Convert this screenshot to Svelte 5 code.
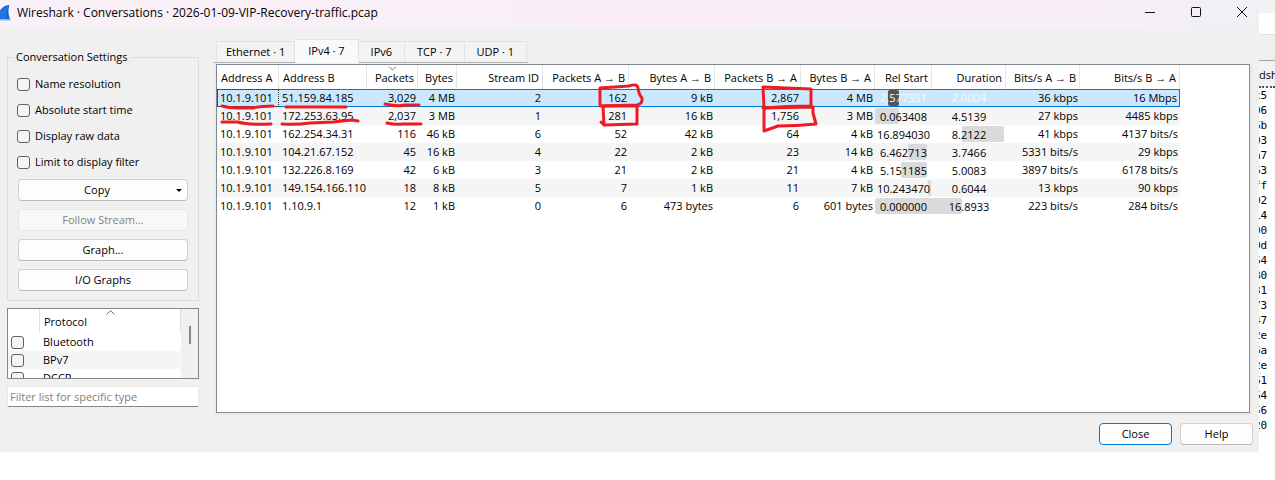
<script lang="ts">
    const options = [
        'Name resolution',
        'Absolute start time',
        'Display raw data',
        'Limit to display filter'
    ];

    const tabs = ['Ethernet · 1', 'IPv4 · 7', 'IPv6', 'TCP · 7', 'UDP · 1'];
    let activeTab = $state(1);

    const protocols = ['Bluetooth', 'BPv7', 'DCCP'];

    const columns = [
        { name: 'Address A', width: 62, left: true },
        { name: 'Address B', width: 88, left: true },
        { name: 'Packets', width: 51, sorted: true },
        { name: 'Bytes', width: 39 },
        { name: 'Stream ID', width: 86 },
        { name: 'Packets A → B', width: 86 },
        { name: 'Bytes A → B', width: 86 },
        { name: 'Packets B → A', width: 86 },
        { name: 'Bytes B → A', width: 74 },
        { name: 'Rel Start', width: 57 },
        { name: 'Duration', width: 74 },
        { name: 'Bits/s A → B', width: 74 },
        { name: 'Bits/s B → A', width: 100 }
    ];

    const rows = [
        ['10.1.9.101', '51.159.84.185', '3,029', '4 MB', '2', '162', '9 kB', '2,867', '4 MB', '2.577351', '2.0004', '36 kbps', '16 Mbps'],
        ['10.1.9.101', '172.253.63.95', '2,037', '3 MB', '1', '281', '16 kB', '1,756', '3 MB', '0.063408', '4.5139', '27 kbps', '4485 kbps'],
        ['10.1.9.101', '162.254.34.31', '116', '46 kB', '6', '52', '42 kB', '64', '4 kB', '16.894030', '8.2122', '41 kbps', '4137 bits/s'],
        ['10.1.9.101', '104.21.67.152', '45', '16 kB', '4', '22', '2 kB', '23', '14 kB', '6.462713', '3.7466', '5331 bits/s', '29 kbps'],
        ['10.1.9.101', '132.226.8.169', '42', '6 kB', '3', '21', '2 kB', '21', '4 kB', '5.151185', '5.0083', '3897 bits/s', '6178 bits/s'],
        ['10.1.9.101', '149.154.166.110', '18', '8 kB', '5', '7', '1 kB', '11', '7 kB', '10.243470', '0.6044', '13 kbps', '90 kbps'],
        ['10.1.9.101', '1.10.9.1', '12', '1 kB', '0', '6', '473 bytes', '6', '601 bytes', '0.000000', '16.8933', '223 bits/s', '284 bits/s']
    ];
    let selected = $state(0);

    const START = 9;
    const DURATION = 10;

    // the time bar runs across the Rel Start and Duration columns
    const span = Math.max(...rows.map(r => Number(r[START]) + Number(r[DURATION])));
    const scale = (columns[START].width + columns[DURATION].width - 2) / span;

    const hexBytes = ['c5', '06', '6b', '03', 'a7', '63', 'ff', '02', '14', '00', '0d', '64', '80', '31', '73', '47', '2e', '6a', '2e', '61', '64', '56', '20'];
</script>

<div class="screen">
    <div class="dialog">
        <header class="titlebar">
            <svg class="fin" width="11" height="18" viewBox="0 0 11 18" aria-hidden="true">
                <path d="M0 7C2 3 5 1.500 9.500 1C8 5 8 10 10 15.500H0Z" fill="#1560c8" />
                <path d="M0 8.500C3 4.500 5 2.500 9 1.500C6.500 6 6 10 7 15H0Z" fill="#1f78e6" />
                <path d="M0 15H10.500V16.500H0Z" fill="#9db0c8" />
            </svg>
            <h1>Wireshark · Conversations · 2026-01-09-VIP-Recovery-traffic.pcap</h1>
            <div class="window-buttons">
                <button aria-label="Minimize">
                    <svg width="12" height="12" viewBox="0 0 12 12"><path d="M1 6.500H11" /></svg>
                </button>
                <button aria-label="Maximize">
                    <svg width="12" height="12" viewBox="0 0 12 12"><rect x="1.500" y="1.500" width="9" height="9" rx="1" /></svg>
                </button>
                <button aria-label="Close window">
                    <svg width="12" height="12" viewBox="0 0 12 12"><path d="M1 1L11 11M11 1L1 11" /></svg>
                </button>
            </div>
        </header>

        <div class="body">
            <aside>
                <fieldset>
                    <legend>Conversation Settings</legend>
                    {#each options as option}
                        <label class="option"><input type="checkbox" />{option}</label>
                    {/each}
                    <div class="actions">
                        <button class="btn copy">Copy<span class="arrow"></span></button>
                        <button class="btn" disabled>Follow Stream...</button>
                        <button class="btn">Graph...</button>
                        <button class="btn">I/O Graphs</button>
                    </div>
                </fieldset>

                <div class="protocols">
                    <div class="protocol-list">
                        <div class="protocol-header">
                            <span class="tick-col"></span>
                            <span class="name-col">
                                Protocol
                                <svg class="sort" width="9" height="5" viewBox="0 0 9 5"><path d="M.5 4.500L4.500 .5L8.500 4.500" /></svg>
                            </span>
                        </div>
                        {#each protocols as protocol}
                            <label class="protocol"><input type="checkbox" />{protocol}</label>
                        {/each}
                    </div>
                    <div class="scrollbar"><div class="thumb"></div></div>
                </div>

                <input class="filter" type="text" placeholder="Filter list for specific type" aria-label="Filter list" />
            </aside>

            <main>
                <div class="tabs" role="tablist">
                    {#each tabs as tab, i}
                        <button
                            role="tab"
                            class="tab"
                            class:active={activeTab === i}
                            aria-selected={activeTab === i}
                            onclick={() => (activeTab = i)}
                        >{tab}</button>
                    {/each}
                </div>
                <div class="pane">
                    <div class="view">
                        <table>
                            <colgroup>
                                {#each columns as col}
                                    <col style="width: {col.width}px" />
                                {/each}
                            </colgroup>
                            <thead>
                                <tr>
                                    {#each columns as col}
                                        <th class:left={col.left}>
                                            {col.name}
                                            {#if col.sorted}
                                                <svg class="sort" width="9" height="5" viewBox="0 0 9 5"><path d="M1 .5L4.500 4L8 .5" /></svg>
                                            {/if}
                                        </th>
                                    {/each}
                                </tr>
                            </thead>
                            <tbody>
                                {#each rows as row, r}
                                    <tr class:selected={selected === r} onclick={() => (selected = r)}>
                                        {#each row as cell, c}
                                            <td class:left={columns[c].left} class:time={c === START || c === DURATION}>
                                                {#if c === START}
                                                    <span
                                                        class="bar"
                                                        style="left: {Number(cell) * scale}px; width: {Number(row[DURATION]) * scale}px"
                                                    ></span>
                                                {/if}
                                                <span class="value">{cell}</span>
                                            </td>
                                        {/each}
                                    </tr>
                                {/each}
                            </tbody>
                        </table>

                        <!-- hand-drawn marks over the busiest conversations -->
                        <svg class="marks" width="620" height="75" viewBox="0 0 620 75" aria-hidden="true">
                            <path d="M5 41Q12 43 20 43L36 43Q44 41 56 41" />
                            <path d="M69 42H129" />
                            <path d="M168 39Q180 42 188 40L202 40" />
                            <path d="M5 57L21 57Q30 60 54 59" />
                            <path d="M65 59Q80 60 93 58L116 57L135 55L141 56" />
                            <path d="M170 58Q178 60 186 59L204 59" />
                            <path d="M383 40V23L412 21Q420 18 421 23Q422 30 425 33Q426 39 420 40L383 41" />
                            <path d="M386 41L420 41L420 59L387 60L386 41M384 57L387 60" />
                            <path d="M546 22L547 43Q570 41 594 41L594 24Q570 23 546 22" />
                            <path d="M546 43L596 42L596 48L599 59Q580 61 561 61L547 66V43" />
                        </svg>
                    </div>
                </div>
            </main>
        </div>

        <footer>
            <button class="btn default">Close</button>
            <button class="btn">Help</button>
        </footer>
    </div>

    <div class="behind">
        <div class="toolbar"></div>
        <div class="field"></div>
        <div class="strip"></div>
        <div class="hex-header">dsh</div>
        <div class="hex">
            {#each hexBytes as byte}
                <div>{byte}</div>
            {/each}
        </div>
    </div>
</div>

<style>
    :global(body) {
        margin: 0;
        background: #fff;
    }

    .screen {
        display: flex;
        align-items: flex-start;
        font-family: 'Open Sans', 'Noto Sans', sans-serif;
        font-size: 11px;
        line-height: 16px;
        color: #000;
    }

    button, input {
        font: inherit;
        color: inherit;
        box-sizing: border-box;
    }

    .dialog {
        flex: 1;
        min-width: 0;
        background: #f0f0f0;
    }

    .titlebar {
        display: flex;
        align-items: center;
        height: 28px;
        background: linear-gradient(90deg, #f9f1f8, #f9eef5 60%, #f8eff6 88%, #f2f0f4 96%);
    }

    .fin {
        margin: 0 6px 3px 0;
    }

    h1 {
        flex: 1;
        margin: 0;
        padding-bottom: 2px;
        font-size: 12px;
        font-weight: 400;
    }

    .window-buttons {
        display: flex;
        padding: 0 11px 4px 0;
        gap: 34px;
    }

    .window-buttons button {
        display: flex;
        width: 12px;
        padding: 0;
        border: 0;
        background: none;
    }

    .window-buttons svg {
        fill: none;
        stroke: #111;
    }

    .body {
        display: grid;
        grid-template-columns: 192px minmax(0, 1fr);
        gap: 15px;
        padding: 11px 7px 0;
    }

    aside {
        display: flex;
        flex-direction: column;
        gap: 7px;
        padding: 10px 0 8px;
    }

    fieldset {
        margin: 0;
        padding: 6px 10px 9px 9px;
        border: 1px solid #dcdcdc;
    }

    legend {
        margin-left: -3px;
        padding: 0 2px;
    }

    .option {
        display: flex;
        align-items: center;
        gap: 5px;
        height: 26px;
    }

    input[type='checkbox'] {
        appearance: none;
        width: 13px;
        height: 13px;
        margin: 0;
        border: 1px solid #626262;
        border-radius: 3px;
        background: #f5f5f5;
    }

    input[type='checkbox']:checked {
        background: #0067c0;
    }

    .actions {
        display: flex;
        flex-direction: column;
        gap: 8px;
        margin: 4px 0 0 1px;
    }

    .btn {
        height: 22px;
        padding: 0 8px;
        border: 1px solid #d0d0d0;
        border-bottom-color: #bababa;
        border-radius: 4px;
        background: #fdfdfd;
    }

    .btn:disabled {
        border-color: #e6e6e6;
        background: #f8f8f8;
        color: #838383;
    }

    .copy {
        display: flex;
        align-items: center;
        justify-content: center;
        padding: 0 5px;
    }

    .copy::before {
        content: '';
        flex: 1;
    }

    .arrow {
        flex: 1;
        padding-left: 12px;
    }

    .arrow::after {
        content: '';
        display: block;
        width: 0;
        margin-left: auto;
        border: 3px solid transparent;
        border-top-color: #000;
        border-bottom: 0;
    }

    .protocols {
        display: flex;
        height: 69px;
        border: 1px solid #828790;
        background: #fff;
        overflow: hidden;
    }

    .protocol-list {
        flex: 1;
    }

    .protocol-header {
        display: flex;
        height: 24px;
        line-height: 26px;
    }

    .tick-col {
        width: 31px;
        border-right: 1px solid #e0e0e0;
    }

    .name-col {
        position: relative;
        flex: 1;
        padding-left: 4px;
        border-right: 1px solid #e0e0e0;
    }

    .sort {
        position: absolute;
        top: 1px;
        left: 50%;
        margin-left: -4px;
        fill: none;
        stroke: #707070;
    }

    .protocol {
        display: flex;
        align-items: center;
        gap: 19px;
        height: 18px;
        padding-left: 3px;
    }

    .protocol:nth-child(odd) {
        background: #f5f5f5;
    }

    .protocol:last-child {
        background: #fff;
    }

    .scrollbar {
        width: 17px;
        background: #f0f0f0;
    }

    .thumb {
        width: 2px;
        height: 18px;
        margin: 17px 0 0 8px;
        background: #858585;
    }

    .filter {
        height: 21px;
        padding: 0 2px;
        border: 1px solid #e8e8e8;
        border-bottom-color: #868686;
        border-radius: 2px;
        background: #fff;
    }

    .filter::placeholder {
        color: #7f7f7f;
        opacity: 1;
    }

    main {
        display: flex;
        flex-direction: column;
    }

    .tabs {
        display: flex;
        align-items: flex-end;
        align-self: flex-start;
        height: 23px;
        padding: 0 1px 0 2px;
        border-bottom: 1px solid #b0b0b0;
    }

    .tab {
        height: 21px;
        padding: 0 12px;
        border: 1px solid #e2e2e2;
        border-width: 1px 1px 0 0;
        background: #f3f3f3;
    }

    .tab:first-child {
        padding: 0 9px;
        border-left-width: 1px;
    }

    .tab.active {
        height: 24px;
        margin-bottom: -1px;
        padding: 0 13px 2px;
        background: #f9f9f9;
    }

    .pane {
        display: flex;
        flex: 1;
        padding: 1px;
        border: 1px solid #e4e4e4;
        border-top: 0;
    }

    .view {
        position: relative;
        flex: 1;
        min-width: 0;
        border: 1px solid #828790;
        background: #fff;
        overflow: auto;
    }

    table {
        width: 963px;
        border-collapse: separate;
        border-spacing: 0;
        table-layout: fixed;
    }

    th {
        position: relative;
        height: 24px;
        box-sizing: border-box;
        padding: 2px 3px 0 4px;
        border-right: 1px solid #e5e5e5;
        font-weight: 400;
        text-align: right;
        white-space: nowrap;
    }

    td {
        height: 18px;
        box-sizing: border-box;
        padding: 0 2px;
        line-height: 16px;
        text-align: right;
        white-space: nowrap;
    }

    th.left {
        text-align: left;
    }

    td.left {
        padding-left: 3px;
        text-align: left;
    }

    tbody tr:nth-child(even) {
        background: #f5f5f5;
    }

    td.time {
        position: relative;
        padding: 1px 0 0;
        text-align: center;
    }

    .bar {
        position: absolute;
        top: 1px;
        bottom: 1px;
        border-radius: 2px;
        background: #dadada;
    }

    .value {
        position: relative;
    }

    tr.selected td {
        border: 1px solid #0078d4;
        border-width: 1px 0;
        background: #cce8ff;
    }

    tr.selected td:first-child {
        padding-left: 2px;
        border-left-width: 1px;
        outline: 1px dotted #333;
        outline-offset: -1px;
    }

    tr.selected td:last-child {
        border-right-width: 1px;
    }

    /* keep the Duration cell from painting over the bar of the row */
    tr.selected .time + .time {
        background: none;
    }

    tr.selected {
        background: #cce8ff;
    }

    tr.selected .time {
        padding: 0;
        color: #f3faff;
    }

    tr.selected .bar {
        top: 0;
        bottom: 0;
        background: #555;
    }

    .marks {
        position: absolute;
        top: 0;
        left: 0;
        fill: none;
        stroke: #ed1c24;
        stroke-width: 3;
        stroke-linecap: round;
        stroke-linejoin: round;
        pointer-events: none;
    }

    footer {
        display: flex;
        justify-content: flex-end;
        gap: 8px;
        padding: 8px 6px 7px;
    }

    footer .btn {
        width: 73px;
    }

    .btn.default {
        border-color: #0078d4;
    }

    .behind {
        width: 16px;
        overflow: hidden;
    }

    .toolbar {
        height: 13px;
        background: #f2f2f2;
    }

    .field {
        height: 21px;
        border-bottom: 1px solid #e0e0e0;
    }

    .strip {
        height: 25px;
        border-bottom: 1px solid #a0a0a0;
        background: #f0f0f0;
    }

    .hex-header {
        height: 25px;
        border-bottom: 2px dotted #555;
        background: #f2f2f2;
        line-height: 28px;
        white-space: nowrap;
    }

    .hex {
        margin-left: -5px;
        font-family: 'DejaVu Sans Mono', monospace;
        font-size: 11px;
        line-height: 15px;
    }
</style>
